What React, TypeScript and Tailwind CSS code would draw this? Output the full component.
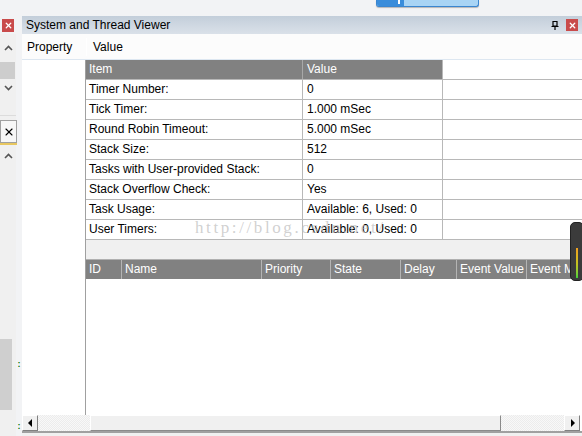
import { X } from 'lucide-react'

const props: [string, string][] = [
  ['Timer Number:', '0'],
  ['Tick Timer:', '1.000 mSec'],
  ['Round Robin Timeout:', '5.000 mSec'],
  ['Stack Size:', '512'],
  ['Tasks with User-provided Stack:', '0'],
  ['Stack Overflow Check:', 'Yes'],
  ['Task Usage:', 'Available: 6, Used: 0'],
  ['User Timers:', 'Available: 0, Used: 0'],
]

const taskCols: [string, string][] = [
  ['ID', 'w-[35px]'],
  ['Name', 'w-[140px]'],
  ['Priority', 'w-[69px]'],
  ['State', 'w-[70px]'],
  ['Delay', 'w-[56px]'],
  ['Event Value', 'w-[70px]'],
  ['Event Mask', 'flex-1'],
]

function Arrow({ dir }: { dir: 'up' | 'down' }) {
  return (
    <svg width="9" height="6" viewBox="0 0 9 6" className="text-[#555]">
      <path
        d={dir === 'up' ? 'M1 5 L4.5 1.5 L8 5' : 'M1 1 L4.5 4.5 L8 1'}
        fill="none"
        stroke="currentColor"
        strokeWidth="1.6"
      />
    </svg>
  )
}

function ScrollButton({ dir }: { dir: 'left' | 'right' }) {
  return (
    <div className="w-[16px] h-[16px] bg-[#f0f0f0] border-t border-l border-t-white border-l-white border-b border-r border-b-[#808080] border-r-[#808080] flex items-center justify-center">
      <svg width="5" height="8" viewBox="0 0 5 8">
        <path d={dir === 'left' ? 'M4 0 L0 4 L4 8 Z' : 'M1 0 L5 4 L1 8 Z'} fill="#000" />
      </svg>
    </div>
  )
}

export default function App() {
  return (
    <div
      className="relative w-[582px] h-[436px] overflow-hidden bg-[#f2f3f5] flex flex-col text-[12px] text-black"
      style={{ fontFamily: '"Segoe UI", "Liberation Sans", Arial, sans-serif' }}
    >
      {/* top strip */}
      <div className="h-[16px] shrink-0 relative">
        <div className="absolute left-[376px] top-0 w-[103px] h-[7px] rounded-b-[3px] border border-t-0 border-[#3a86d0] bg-[#a8d4f5] shadow-[0_1px_1px_rgba(0,0,0,0.25)] flex overflow-hidden">
          <div className="w-[27px] bg-[#3a8ddb] flex justify-end">
            <div className="w-[2px] h-[4px] bg-white mr-[4px]" />
          </div>
        </div>
      </div>

      <div className="flex flex-1 min-h-0">
        {/* left dock strip */}
        <div className="w-[22px] shrink-0 flex">
          <div className="w-[16px] flex flex-col bg-[#f0f0f0]">
            <div className="h-[18px] flex items-center justify-center bg-[#f2f3f5]">
              <div className="w-[12px] h-[13px] bg-[#c94b4b] flex items-center justify-center">
                <X size={9} strokeWidth={3.5} className="text-white" />
              </div>
            </div>
            <div className="h-[28px] flex items-center justify-center">
              <Arrow dir="up" />
            </div>
            <div className="h-[17px] bg-[#cdcdcd] w-[15px]" />
            <div className="h-[18px] flex items-center justify-center">
              <Arrow dir="down" />
            </div>
            <div className="h-[19px] bg-[#f0f0f0] border-b border-[#dcdcdc]" />
            <div className="h-[23px] mt-[4px] w-[17px] border border-[#a0a0a0] bg-[#f7f7f7] flex items-center justify-center">
              <X size={12} strokeWidth={2.2} className="text-black" />
            </div>
            <div className="h-[2px] w-[17px] bg-[#e8c760]" />
            <div className="h-[22px] flex items-center justify-center">
              <Arrow dir="up" />
            </div>
            <div className="flex-1" />
            <div className="h-[71px] w-[12px] bg-[#cfcfcf]" />
            <div className="h-[26px]" />
          </div>
          <div className="w-[6px] flex flex-col items-center">
            <div className="h-[344px]" />
            <span className="text-[#0a7a0a] text-[9px] leading-[8px] font-bold">:</span>
            <div className="flex-1" />
            <span className="text-[#0a7a0a] text-[9px] leading-[8px] font-bold mb-[6px]">:</span>
          </div>
        </div>

        {/* main panel */}
        <div className="flex-1 flex flex-col min-w-0">
          <div className="h-[18px] shrink-0 bg-gradient-to-b from-[#c3ceda] to-[#dae1e9] flex items-center pl-[4px] pr-[4px]">
            <span className="flex-1 leading-none">System and Thread Viewer</span>
            <svg width="8" height="9" viewBox="0 0 8 9" className="mr-[7px]">
              <path d="M2 0.5 H6 V5 H2 Z M0.5 5.5 H7.5 M4 5.5 V9" fill="none" stroke="#000" strokeWidth="1.2" />
            </svg>
            <div className="w-[12px] h-[12px] bg-[#c94b4b] flex items-center justify-center">
              <X size={9} strokeWidth={3.5} className="text-white" />
            </div>
          </div>

          <div className="h-[26px] shrink-0 bg-[#fcfcfc] border-b border-[#dde7f1] flex items-center">
            <span className="w-[64px] pl-[5px]">Property</span>
            <span className="pl-[6px] border-l border-white">Value</span>
          </div>

          <div className="flex-1 flex bg-white min-h-0">
            <div className="w-[64px] shrink-0 border-r border-[#a0a0a0]" />
            <div className="flex-1 flex flex-col">
              {/* property table */}
              <div className="grid grid-cols-[216px_140px_1fr]">
                <div className="h-[19px] bg-[#818181] text-white pl-[3px] leading-[19px]">Item</div>
                <div className="h-[19px] bg-[#818181] text-white pl-[4px] leading-[19px] border-l border-[#a8a8a8]">Value</div>
                <div className="h-[19px] border-l border-[#b8b8b8]" />
                {props.map(([k, v]) => (
                  <div key={k} className="contents">
                    <div className="h-[20px] border-t border-[#b8b8b8] pl-[3px] leading-[19px] whitespace-nowrap">{k}</div>
                    <div className="h-[20px] border-t border-l border-[#b8b8b8] pl-[4px] leading-[19px] whitespace-nowrap">{v}</div>
                    <div className="h-[20px] border-t border-l border-[#b8b8b8]" />
                  </div>
                ))}
              </div>
              <div className="h-[20px] bg-[#f0f0f0] border-t border-[#b8b8b8]" />
              {/* task table header */}
              <div className="h-[20px] bg-[#818181] text-white flex border-t border-[#b0b0b0]">
                {taskCols.map(([c, w], i) => (
                  <div
                    key={c}
                    className={`${w} shrink-0 overflow-hidden whitespace-nowrap leading-[19px] pl-[3px] ${i > 0 ? 'border-l border-[#b4b4b4]' : ''}`}
                  >
                    {c}
                  </div>
                ))}
              </div>
              <div className="flex-1" />
            </div>
          </div>

          {/* horizontal scroll bar */}
          <div className="h-[16px] shrink-0 flex bg-[#f4f4f4]">
            <ScrollButton dir="left" />
            <div className="w-[52px] bg-[repeating-conic-gradient(#f8f8f8_0_25%,#ececec_0_50%)] bg-[length:2px_2px]" />
            <div className="w-[411px] bg-[#f0f0f0] border-t border-l border-t-white border-l-white border-b border-r border-b-[#8a8a8a] border-r-[#8a8a8a]" />
            <div className="flex-1 bg-[repeating-conic-gradient(#f8f8f8_0_25%,#ececec_0_50%)] bg-[length:2px_2px]" />
            <ScrollButton dir="right" />
            <div className="w-[2px] bg-white" />
          </div>
          <div className="h-[5px] shrink-0 border-t-2 border-[#a0a0a0] bg-[#f0f0f0]" />
        </div>
      </div>

      {/* watermark */}
      <div
        className="absolute left-[195px] top-[218px] text-[17px] leading-[20px] text-[#bdbdbd]/70 pointer-events-none tracking-[2.6px]"
        style={{ fontFamily: '"Liberation Serif", serif' }}
      >
        http://blog.csdn.net/
      </div>

      {/* floating meter widget */}
      <div className="absolute left-[570px] top-[222px] w-[14px] h-[59px] rounded-[5px] bg-[#3b3b3b] border border-[#222] flex justify-center pt-[25px]">
        <div className="w-[2px] h-[30px] bg-gradient-to-b from-[#f0a020] via-[#c8c020] to-[#3ad03a]" />
      </div>
    </div>
  )
}
